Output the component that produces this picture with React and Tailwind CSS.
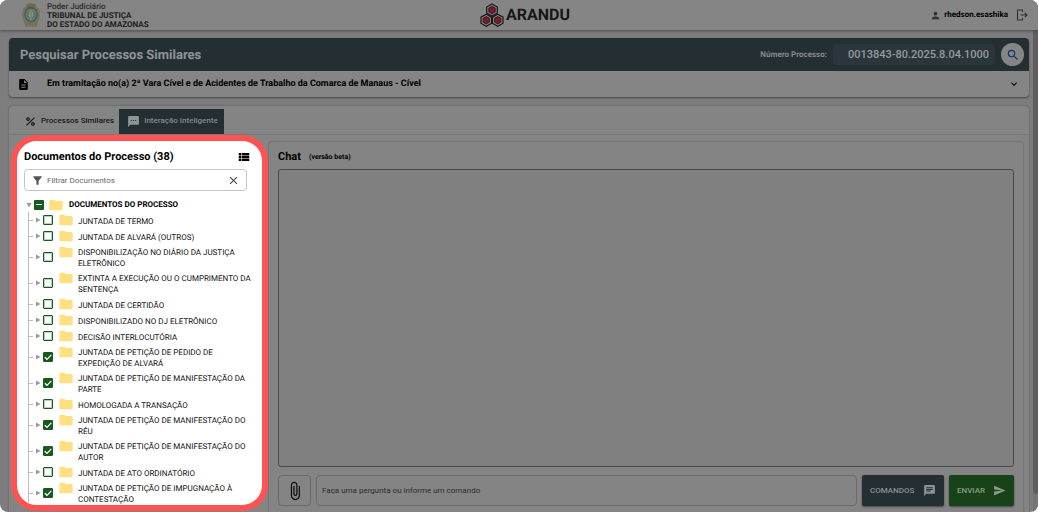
import { useState } from 'react'
import {
  MdAttachFile,
  MdChat,
  MdClose,
  MdDescription,
  MdExpandMore,
  MdFilterAlt,
  MdFolder,
  MdPercent,
  MdPerson,
  MdSearch,
  MdSend,
  MdSms,
  MdViewList,
} from 'react-icons/md'

const DOCUMENTS = [
  { id: 1, title: 'JUNTADA DE TERMO', checked: false },
  { id: 2, title: 'JUNTADA DE ALVARÁ (OUTROS)', checked: false },
  { id: 3, title: 'DISPONIBILIZAÇÃO NO DIÁRIO DA JUSTIÇA ELETRÔNICO', checked: false },
  { id: 4, title: 'EXTINTA A EXECUÇÃO OU O CUMPRIMENTO DA SENTENÇA', checked: false },
  { id: 5, title: 'JUNTADA DE CERTIDÃO', checked: false },
  { id: 6, title: 'DISPONIBILIZADO NO DJ ELETRÔNICO', checked: false },
  { id: 7, title: 'DECISÃO INTERLOCUTÓRIA', checked: false },
  { id: 8, title: 'JUNTADA DE PETIÇÃO DE PEDIDO DE EXPEDIÇÃO DE ALVARÁ', checked: true },
  { id: 9, title: 'JUNTADA DE PETIÇÃO DE MANIFESTAÇÃO DA PARTE', checked: true },
  { id: 10, title: 'HOMOLOGADA A TRANSAÇÃO', checked: false },
  { id: 11, title: 'JUNTADA DE PETIÇÃO DE MANIFESTAÇÃO DO RÉU', checked: true },
  { id: 12, title: 'JUNTADA DE PETIÇÃO DE MANIFESTAÇÃO DO AUTOR', checked: true },
  { id: 13, title: 'JUNTADA DE ATO ORDINATÓRIO', checked: false },
  { id: 14, title: 'JUNTADA DE PETIÇÃO DE IMPUGNAÇÃO À CONTESTAÇÃO', checked: true },
]

function CoatOfArms() {
  return (
    <svg viewBox="0 0 20 26" className="h-[26px] w-5" aria-hidden="true">
      <path d="M5 2.500 10 1l5 1.500-1 3H6z" fill="#6f6b45" />
      <path d="M2 7 5 4.500h10L18 7l1 6-1.500 6L14 23H6l-3.500-4L1 13z" fill="#6f7062" />
      <path d="M3 8 1.500 13 4 19M17 8l1.500 5L16 19" fill="none" stroke="#7d7650" strokeWidth="1.200" />
      <ellipse cx="10" cy="12.500" rx="6.500" ry="7.500" fill="#3d5a54" />
      <ellipse cx="10" cy="12.500" rx="5" ry="6" fill="#4a7786" stroke="#858259" strokeWidth=".8" />
      <path d="M10 7.500c2 2 2.500 4 2.500 6L10 18l-2.500-4.500c0-2 .5-4 2.500-6z" fill="#839181" />
      <path d="M10 9v7" stroke="#857a43" strokeWidth="1.200" />
      <path d="M3 20l4 2h6l4-2-1 4.500H4z" fill="#7b7150" />
      <path d="M7 6h6" stroke="#6c3f36" strokeWidth="1" />
    </svg>
  )
}

function Hexagon({ x, y }) {
  return (
    <g transform={`translate(${x} ${y})`}>
      <path d="M0-6 5.300-3v6L0 6l-5.300-3v-6z" fill="#858585" stroke="#151515" strokeWidth="1.200" />
      <path d="M0-3.700 3.200-1.900v3.800L0 3.700l-3.200-1.800v-3.800z" fill="#7c1a2c" stroke="#2a1014" strokeWidth=".8" />
    </g>
  )
}

function Logo() {
  return (
    <svg viewBox="0 0 24 25" className="h-[25px] w-6" aria-hidden="true">
      <Hexagon x={12} y={7} />
      <Hexagon x={6.3} y={17.2} />
      <Hexagon x={17.7} y={17.2} />
    </svg>
  )
}

function Header() {
  return (
    <header className="z-10 grid h-[30px] shrink-0 grid-cols-3 items-center bg-[#858585] pr-[10px] pl-[21px] shadow-[0_1px_3px_#4a4a4a]">
      <div className="flex items-center gap-[6px]">
        <CoatOfArms />
        <p className="text-[8px] leading-[9px] font-bold text-[#1c1c1c]">
          <span className="font-medium text-[#2b2b2b]">Poder Judiciário</span>
          <br />
          TRIBUNAL DE JUSTIÇA
          <br />
          DO ESTADO DO AMAZONAS
        </p>
      </div>
      <div className="flex items-center justify-center gap-[2px] pl-px">
        <Logo />
        <span className="text-[16px] leading-none font-bold text-[#161616]">ARANDU</span>
      </div>
      <div className="flex items-center justify-end">
        <MdPerson className="size-[11px] text-[#333]" />
        <span className="ml-[3px] text-[8px] font-bold text-black">rhedson.esashika</span>
        <button type="button" aria-label="Sair" className="ml-2">
          <svg viewBox="0 0 12 12" className="size-3 fill-none stroke-[#303030]">
            <path d="M6.500 3V1h-5v10h5V9M4.500 6h6.500M8.800 3.800 11 6 8.800 8.200" strokeWidth="1.100" />
          </svg>
        </button>
      </div>
    </header>
  )
}

function SearchCard() {
  return (
    <section className="shrink-0 rounded-sm bg-[#858585] shadow-[0_1px_2px_#444]">
      <div className="flex h-[33px] items-center rounded-t-sm bg-[#242f34] pr-[5px] pl-[11px]">
        <h1 className="flex-1 pt-[2px] text-[13px] font-bold text-[#8f9496]">Pesquisar Processos Similares</h1>
        <label htmlFor="numero" className="text-[8px] font-bold text-[#858a8c]">
          Número Processo:
        </label>
        <input
          id="numero"
          defaultValue="0013843-80.2025.8.04.1000"
          className="ml-[6px] h-[21px] w-[162px] rounded-sm bg-[#2a363b] pr-[6px] text-right text-[11px] font-medium text-[#969b9d]"
        />
        <button
          type="button"
          aria-label="Pesquisar"
          className="ml-[6px] flex size-[23px] items-center justify-center rounded-full bg-[#858585] text-[#0e3568]"
        >
          <MdSearch className="size-[14px]" />
        </button>
      </div>
      <div className="flex h-[26px] items-center pr-[9px] pl-[8px]">
        <MdDescription className="size-[13px] text-black" />
        <p className="ml-[17px] flex-1 pt-[2px] text-[9px] font-bold text-black">
          Em tramitação no(a) 2ª Vara Cível e de Acidentes de Trabalho da Comarca de Manaus - Cível
        </p>
        <button type="button" aria-label="Expandir">
          <MdExpandMore className="size-3 text-black" />
        </button>
      </div>
    </section>
  )
}

function Tabs() {
  return (
    <nav className="flex h-[29px] shrink-0 items-center border-b border-[#797979] pt-[2px] pl-[7px] text-[8px] font-medium">
      <button type="button" className="flex h-[25px] items-center gap-[4px] pr-[5px] pl-2 text-[#161616]">
        <MdPercent className="size-[13px] text-[#111]" />
        Processos Similares
      </button>
      <button type="button" className="flex h-[25px] items-center gap-[4px] bg-[#242f34] pr-[6px] pl-2 text-[#858a8c]">
        <MdSms className="size-[13px] text-[#8f9496]" />
        Interação Inteligente
      </button>
    </nav>
  )
}

function Caret({ open }) {
  return (
    <svg viewBox="0 0 6 6" className="size-[6px] fill-[#9a9a9a]">
      <path d={open ? 'M.5 1h5L3 5.500z' : 'M1 .5v5L5.500 3z'} />
    </svg>
  )
}

function CheckBox({ id, checked, onChange }) {
  return (
    <span className="grid size-[10px] shrink-0 place-items-center">
      <input
        id={id}
        type="checkbox"
        checked={checked}
        onChange={onChange}
        className="col-start-1 row-start-1 size-[10px] appearance-none rounded-[1px] border border-[#175a1d] bg-white outline outline-[#175a1d]/30 -outline-offset-2 checked:bg-[#175a1d]"
      />
      {checked && (
        <svg viewBox="0 0 10 10" className="pointer-events-none col-start-1 row-start-1 size-[10px] fill-none stroke-white">
          <path d="M1.800 5.200 4 7.300 8.300 2.900" strokeWidth="1.200" />
        </svg>
      )}
    </span>
  )
}

function DocumentTree() {
  const [docs, setDocs] = useState(DOCUMENTS)

  const toggle = (id) =>
    setDocs(docs.map((doc) => (doc.id === id ? { ...doc, checked: !doc.checked } : doc)))

  return (
    <div className="mt-[6px] pl-[2px] text-[8px] leading-[11px] text-[#111]">
      <div className="flex h-[15px] items-center">
        <button type="button" aria-label="Recolher">
          <Caret open />
        </button>
        <span className="ml-[2px] grid size-[10px] place-items-center">
          <input
            id="todos"
            type="checkbox"
            className="col-start-1 row-start-1 size-[10px] appearance-none rounded-[1px] bg-[#175a1d]"
          />
          <span className="pointer-events-none col-start-1 row-start-1 h-px w-[6px] bg-white" />
        </span>
        <MdFolder className="ml-[4px] size-4 text-[#ffdf80]" />
        <label htmlFor="todos" className="ml-[5px] font-bold text-black">
          DOCUMENTOS DO PROCESSO
        </label>
      </div>
      <ul className="ml-[2px] border-l border-[#bdbdbd]">
        {docs.map((doc) => (
          <li key={doc.id} className="flex min-h-4 items-center">
            <span className="h-px w-[4px] bg-[#bdbdbd]" />
            <button type="button" aria-label="Expandir" className="ml-[2px]">
              <Caret />
            </button>
            <div className="ml-[2px] flex flex-1 items-center">
              <CheckBox id={`doc-${doc.id}`} checked={doc.checked} onChange={() => toggle(doc.id)} />
              <MdFolder className="ml-[5px] size-4 shrink-0 self-start text-[#ffdf80]" />
              <label htmlFor={`doc-${doc.id}`} className="ml-[4px] max-w-[176px] pt-[3px] pb-px">
                {doc.title}
              </label>
            </div>
          </li>
        ))}
      </ul>
    </div>
  )
}

function DocumentsPanel() {
  return (
    <aside className="mb-px w-[257px] shrink-0 overflow-hidden rounded-[26px] border-[6px] border-[#ff5252] bg-white px-[7px] pt-[8px]">
      <div className="flex h-4 items-center justify-between pr-[4px]">
        <h2 className="text-[11px] font-bold text-black">Documentos do Processo (38)</h2>
        <button type="button" aria-label="Ver lista">
          <MdViewList className="size-[14px] text-black" />
        </button>
      </div>
      <div className="mt-[4px] mr-[8px] flex h-[22px] items-center rounded-sm border border-[#c4c4c4] px-[6px]">
        <MdFilterAlt className="size-[13px] shrink-0 text-[#555]" />
        <input
          aria-label="Filtrar Documentos"
          placeholder="Filtrar Documentos"
          className="ml-[3px] min-w-0 flex-1 pt-px text-[8px] placeholder:text-[#666]"
        />
        <button type="button" aria-label="Limpar">
          <MdClose className="size-[13px] text-[#444]" />
        </button>
      </div>
      <DocumentTree />
    </aside>
  )
}

function Chat() {
  return (
    <section className="mt-[7px] mr-[6px] ml-px flex flex-1 flex-col rounded-t-sm bg-[#848484] px-[9px] pb-[6px] shadow-[0_0_2px_#505050]">
      <h2 className="flex h-[27px] shrink-0 items-center gap-2 pt-[4px] text-[11px] font-bold text-black">
        Chat <small className="text-[7px] font-bold">(versão beta)</small>
      </h2>
      <div className="flex-1 rounded-[3px] border border-[#4a4a4a] bg-[#808080]" />
      <form className="mt-2 flex h-[31px] shrink-0 gap-[5px] text-[8px] font-medium" onSubmit={(e) => e.preventDefault()}>
        <button
          type="button"
          aria-label="Anexar arquivo"
          className="flex w-[33px] items-center justify-center rounded-sm border border-[#6a6a6a]"
        >
          <MdAttachFile className="size-5 text-[#111]" />
        </button>
        <input
          aria-label="Mensagem"
          placeholder="Faça uma pergunta ou informe um comando"
          className="min-w-0 flex-1 rounded-sm border border-[#6a6a6a] px-[5px] font-normal placeholder:text-[#2c2c2c]"
        />
        <button
          type="button"
          className="flex w-[82px] items-center justify-between rounded-xs bg-[#242f34] px-2 text-[#8c9193] shadow-[0_1px_2px_#444]"
        >
          COMANDOS
          <MdChat className="size-[13px]" />
        </button>
        <button
          type="submit"
          className="flex w-[65px] items-center justify-between rounded-xs bg-[#184319] px-2 text-[#8b9a8b] shadow-[0_1px_2px_#444]"
        >
          ENVIAR
          <MdSend className="size-[13px]" />
        </button>
      </form>
    </section>
  )
}

export default function App() {
  return (
    <div className="bg-white pr-px font-[Roboto,sans-serif] [text-rendering:geometricPrecision]">
      <div className="flex h-screen flex-col overflow-hidden rounded-lg bg-[#7d7d7d]">
        <Header />
        <div className="flex min-h-0 flex-1">
          <main className="flex min-w-0 flex-1 flex-col gap-[9px] pt-2 pr-[4px] pl-[9px]">
            <SearchCard />
            <section className="flex min-h-0 flex-1 flex-col rounded-t-sm bg-[#848484] shadow-[0_0_2px_#505050]">
              <Tabs />
              <div className="flex min-h-0 flex-1 pl-[2px]">
                <DocumentsPanel />
                <Chat />
              </div>
            </section>
          </main>
          {/* Scrollbar */}
          <div className="w-[5px] bg-[#757575] pb-[18px]">
            <div className="h-full rounded-b-sm bg-[#5f5f5f]" />
          </div>
        </div>
      </div>
    </div>
  )
}
